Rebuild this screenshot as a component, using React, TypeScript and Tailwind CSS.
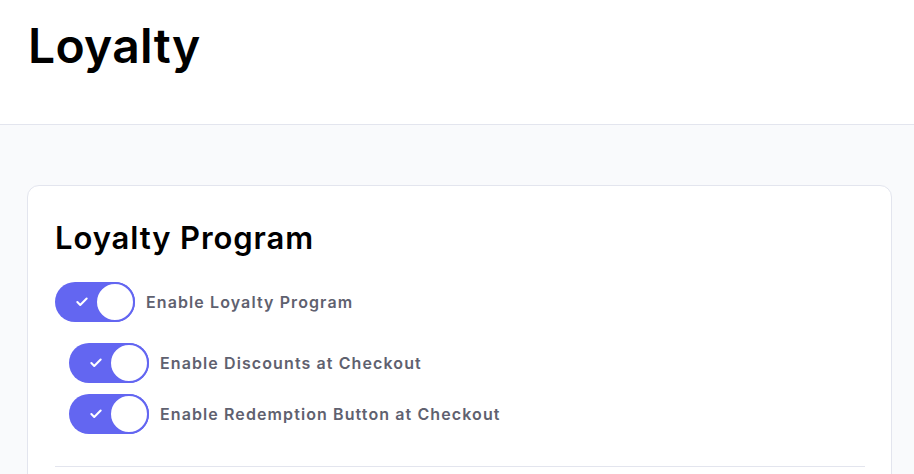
import { Check } from 'lucide-react'

// Loyalty settings page

interface ToggleRowProps {
  label: string
  indent?: boolean
}

function ToggleRow({ label, indent = false }: ToggleRowProps) {
  return (
    <div className={`flex items-center gap-[11px] ${indent ? 'pl-[14px]' : ''}`}>
      <button
        type="button"
        className="relative flex h-10 w-20 shrink-0 items-center rounded-full bg-[#6366f1]"
      >
        <Check className="absolute left-[20px] h-[14px] w-[14px] text-white" strokeWidth={3.5} />
        <span className="ml-auto h-10 w-10 rounded-full border-2 border-[#6366f1] bg-white" />
      </button>
      <span className="text-base font-semibold tracking-[1.1px] text-[#5f616f]">{label}</span>
    </div>
  )
}

export default function App() {
  return (
    <div className="min-h-screen bg-[#f9fafc] font-['Inter',sans-serif]">
      {/* Header */}
      <div className="h-[125px] border-b border-[#e3e5ee] bg-white px-[28px] pt-[14px]">
        <h1 className="text-[48px] font-semibold leading-[64px] tracking-[0.3px] text-black">Loyalty</h1>
      </div>

      {/* Content */}
      <div className="pl-[27px] pr-[22px] pt-[60px]">
        <div className="rounded-xl border border-[#e3e5ee] bg-white pl-[27px] pr-[26px] pt-[32px] pb-8">
          <h2 className="text-[31px] font-semibold leading-[40px] tracking-[0.9px] text-black">Loyalty Program</h2>
          <div className="mt-[24px] flex flex-col">
            <ToggleRow label="Enable Loyalty Program" />
            <div className="mt-[21px] flex flex-col gap-[11px]">
              <ToggleRow label="Enable Discounts at Checkout" indent />
              <ToggleRow label="Enable Redemption Button at Checkout" indent />
            </div>
          </div>
          <div className="mt-[32px] border-t border-[#e3e5ee]" />
          <div className="h-24" />
        </div>
      </div>
    </div>
  )
}
